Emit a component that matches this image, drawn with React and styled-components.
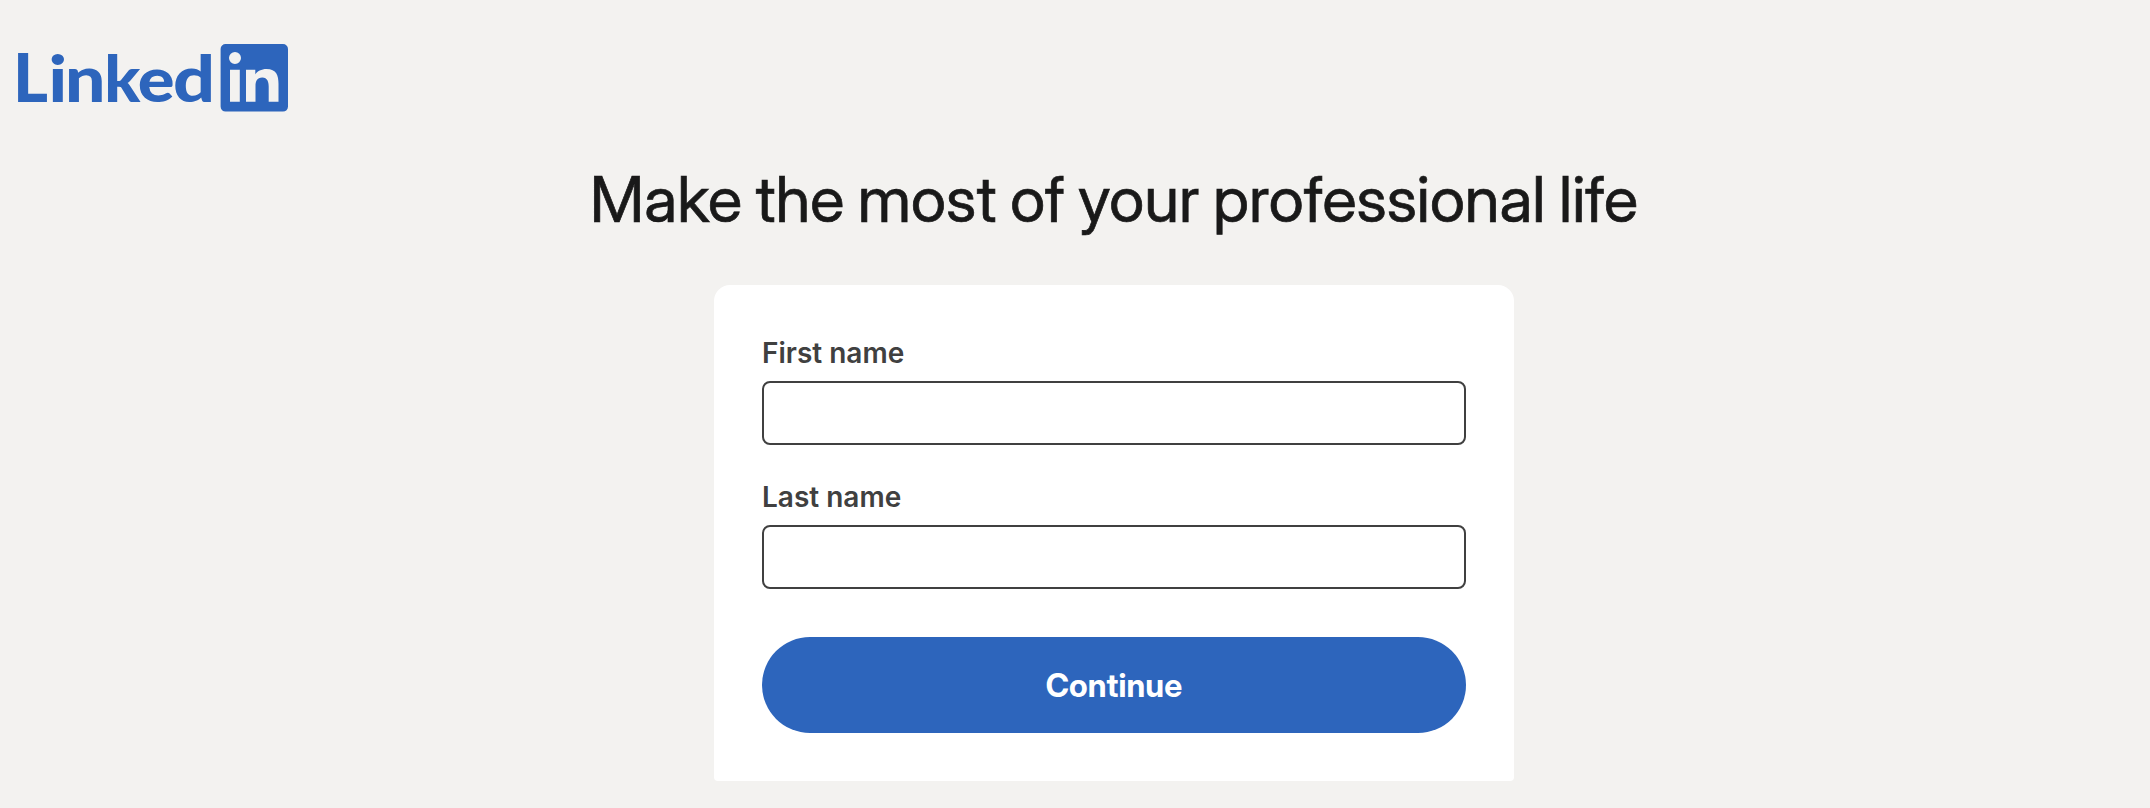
import React from "react";
import styled, { createGlobalStyle } from "styled-components";

const GlobalStyle = createGlobalStyle`
  * { box-sizing: border-box; }
  body {
    margin: 0;
    background: #f3f2f0;
    font-family: Inter, "Liberation Sans", sans-serif;
  }
`;

const Page = styled.div`
  min-height: 808px;
  background: #f3f2f0;
`;

const Header = styled.header`
  height: 155px;
  padding: 44px 18px 0;
`;

const Logo = styled.svg`
  display: block;
  width: 270px;
  height: 68px;
  overflow: visible;
  fill: #2d65bc;
`;

const Letter = styled.text`
  font-family: Lato, "Liberation Sans", sans-serif;
  font-weight: 900;
  font-size: 67px;
`;

const Main = styled.main`
  display: flex;
  flex-direction: column;
  align-items: center;
  padding-left: 78px;
`;

const Title = styled.h1`
  margin: 0 0 50px;
  height: 80px;
  font-family: "Inter Display", Inter, "Liberation Sans", sans-serif;
  font-size: 63.5px;
  line-height: 88px;
  font-weight: 400;
  word-spacing: -2.2px;
  -webkit-text-stroke: 0.7px #191919;
  color: #191919;
  white-space: nowrap;
`;

const Card = styled.form`
  display: flex;
  flex-direction: column;
  width: 800px;
  height: 496px;
  padding: 48px;
  background: #fff;
  border-radius: 16px 16px 4px 4px;
`;

const Field = styled.label`
  display: flex;
  flex-direction: column;
  height: 144px;
`;

const FieldLabel = styled.span`
  height: 48px;
  line-height: 40px;
  font-size: 28px;
  font-weight: 600;
  color: #404040;
`;

const Input = styled.input`
  width: 100%;
  height: 64px;
  padding: 0 16px;
  border: 2px solid #404040;
  border-radius: 8px;
  background: #fff;
  font: inherit;
  font-size: 28px;
  outline: none;
`;

const Submit = styled.button`
  height: 96px;
  margin-top: 16px;
  border: 0;
  border-radius: 48px;
  background: #2d65bc;
  color: #fff;
  font-family: "Inter Display", Inter, "Liberation Sans", sans-serif;
  font-size: 32px;
  font-weight: 700;
  letter-spacing: 0.1px;
`;

/* Each letter of the wordmark: position and horizontal / vertical scale. */
const LETTERS = [
  ["L", -5, 1, 0.985],
  ["i", 30.6, 1.07, 0.96],
  ["n", 47, 1.065, 0.93],
  ["k", 86.2, 0.99, 0.957],
  ["e", 119.7, 1.025, 0.93],
  ["d", 155.1, 1.1, 0.957],
];

function LinkedInLogo() {
  return (
    <Logo viewBox="0 0 270 68" role="img" aria-label="LinkedIn">
      {LETTERS.map(([char, x, sx, sy]) => (
        <Letter key={char} transform={`translate(${x} 57.7) scale(${sx} ${sy})`}>
          {char}
        </Letter>
      ))}
      <path
        fillRule="evenodd"
        d="M207.6 0H265a5 5 0 0 1 5 5V62.6a5 5 0 0 1-5 5H207.6a5 5 0 0 1-5-5V5a5 5 0 0 1 5-5ZM217 8.1a6 6 0 1 0 0 12a6 6 0 1 0 0-12ZM212 25.7V57.7H221.8V25.7ZM228 25.7V57.7H237.5V42C237.5 37.5 239 33.5 244.3 33.5C249.4 33.5 250.7 38 250.7 42.5V57.7H260.5V40C260.5 31.4 258.5 25 248.5 25C243.5 25 239 27.5 237.4 30.2H237.3V25.7Z"
      />
    </Logo>
  );
}

export default function App() {
  return (
    <Page>
      <GlobalStyle />
      <Header>
        <LinkedInLogo />
      </Header>
      <Main>
        <Title>Make the most of your professional life</Title>
        <Card onSubmit={(e) => e.preventDefault()}>
          <Field>
            <FieldLabel>First name</FieldLabel>
            <Input type="text" name="firstName" />
          </Field>
          <Field>
            <FieldLabel>Last name</FieldLabel>
            <Input type="text" name="lastName" />
          </Field>
          <Submit type="submit">Continue</Submit>
        </Card>
      </Main>
    </Page>
  );
}
